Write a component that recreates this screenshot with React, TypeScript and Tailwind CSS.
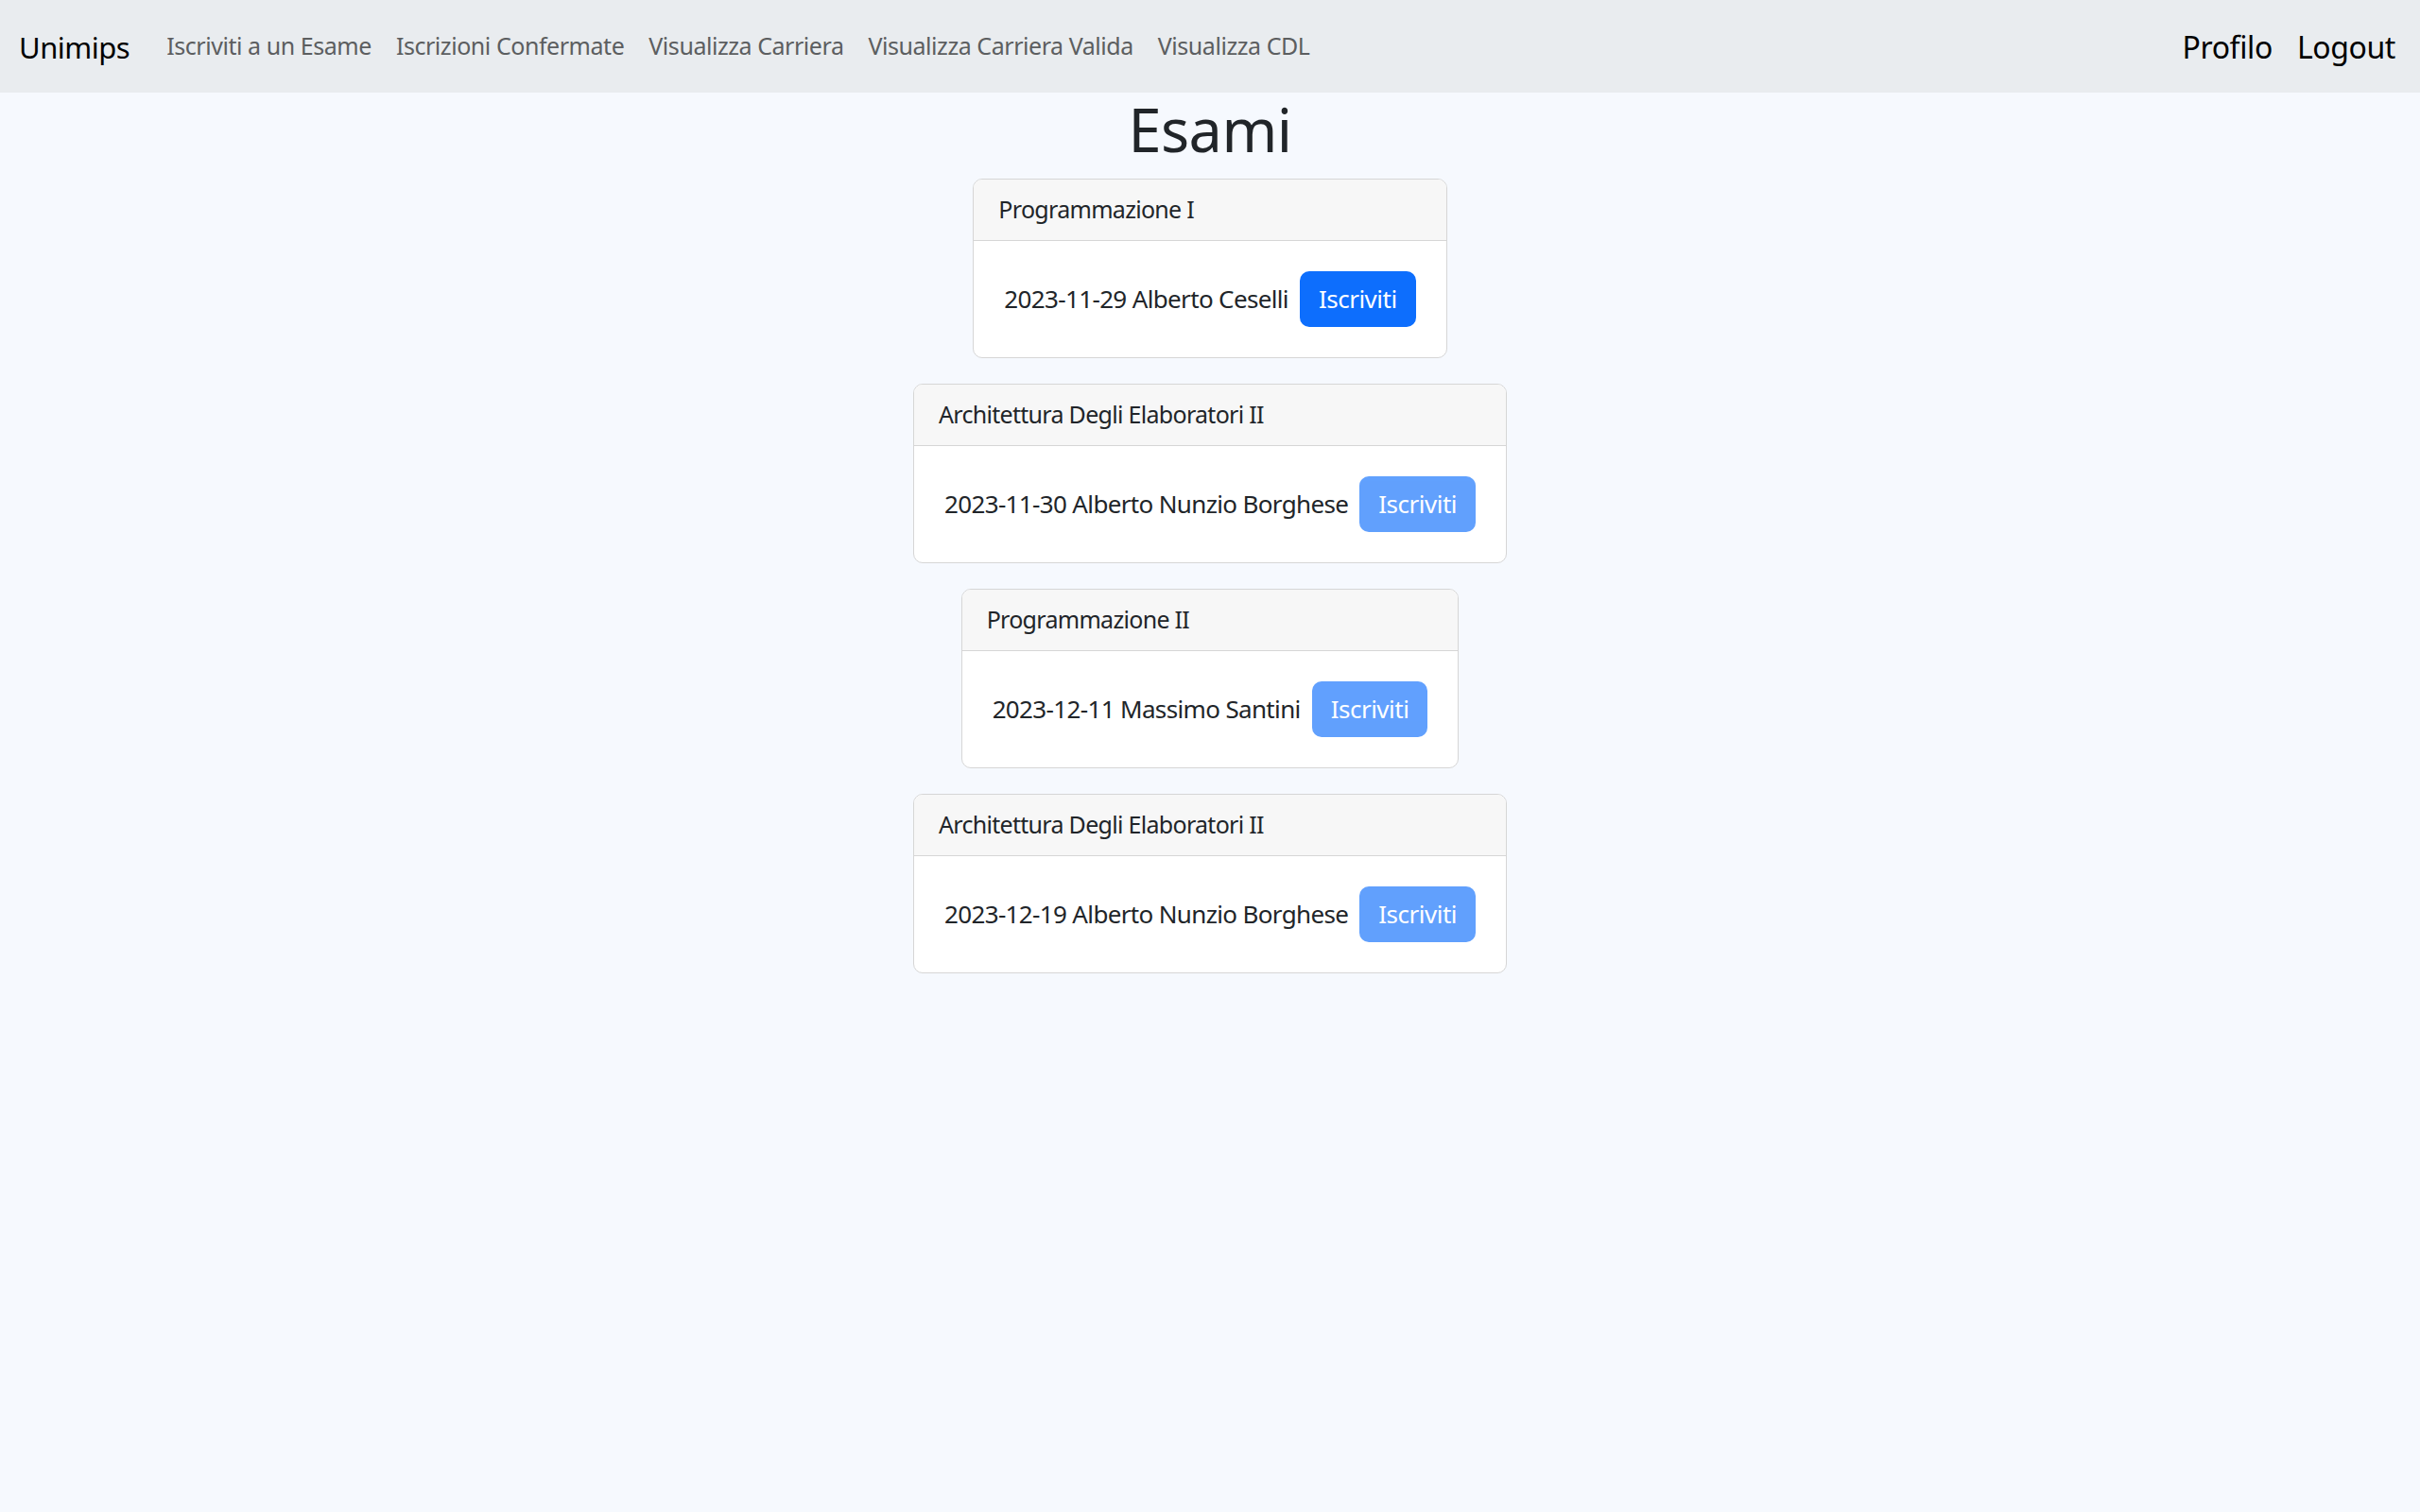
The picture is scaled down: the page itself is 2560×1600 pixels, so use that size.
const exams = [
  { course: 'Programmazione I', date: '2023-11-29', teacher: 'Alberto Ceselli', active: true },
  { course: 'Architettura Degli Elaboratori II', date: '2023-11-30', teacher: 'Alberto Nunzio Borghese', active: false },
  { course: 'Programmazione II', date: '2023-12-11', teacher: 'Massimo Santini', active: false },
  { course: 'Architettura Degli Elaboratori II', date: '2023-12-19', teacher: 'Alberto Nunzio Borghese', active: false },
];

const links = [
  'Iscriviti a un Esame',
  'Iscrizioni Confermate',
  'Visualizza Carriera',
  'Visualizza Carriera Valida',
  'Visualizza CDL',
];

const App = () => {
  return (
    <div className="min-h-screen bg-[#f6f9fe] text-[#212529] font-['Noto_Sans',sans-serif]">
      {/* Navbar */}
      <nav className="h-[98px] bg-[#e9ecef] flex items-center justify-between px-[20px]">
        <div className="flex items-center pt-[2px]">
          <a className="text-[31px] tracking-[-0.5px] text-black mr-[26px] leading-none">Unimips</a>
          <ul className="flex items-center">
            {links.map((l) => (
              <li key={l}>
                <a className="px-[13px] text-[25px] tracking-[-0.45px] text-[#5c5e60] leading-none">{l}</a>
              </li>
            ))}
          </ul>
        </div>
        <div className="flex items-center gap-[26px] pr-[6px] pt-[2px] text-[32px] tracking-[-0.4px] text-black leading-none">
          <a>Profilo</a>
          <a>Logout</a>
        </div>
      </nav>

      {/* Content */}
      <div className="flex flex-col items-center">
        <h1 className="text-[63px] tracking-[-0.5px] leading-[78px] mb-[13px] font-normal">Esami</h1>
        {exams.map((e, i) => (
          <div key={i} className="mb-[27px] bg-white border border-[#d6d6d6] rounded-[10px] overflow-hidden">
            <div className="h-[65px] px-[26px] flex items-center text-[25px] tracking-[-0.7px] bg-[#f7f7f7] border-b border-[#d6d6d6]">
              {e.course}
            </div>
            <div className="p-[26px] flex items-center">
              <span className="m-[6px] text-[26px] tracking-[-0.65px]">{e.date} {e.teacher}</span>
              <button
                className={`m-[6px] h-[59px] px-[20px] rounded-[10px] bg-[#0d6efd] text-white text-[26px] tracking-[-0.5px] ${e.active ? '' : 'opacity-65'}`}
              >
                Iscriviti
              </button>
            </div>
          </div>
        ))}
      </div>
    </div>
  );
};

export default App;
